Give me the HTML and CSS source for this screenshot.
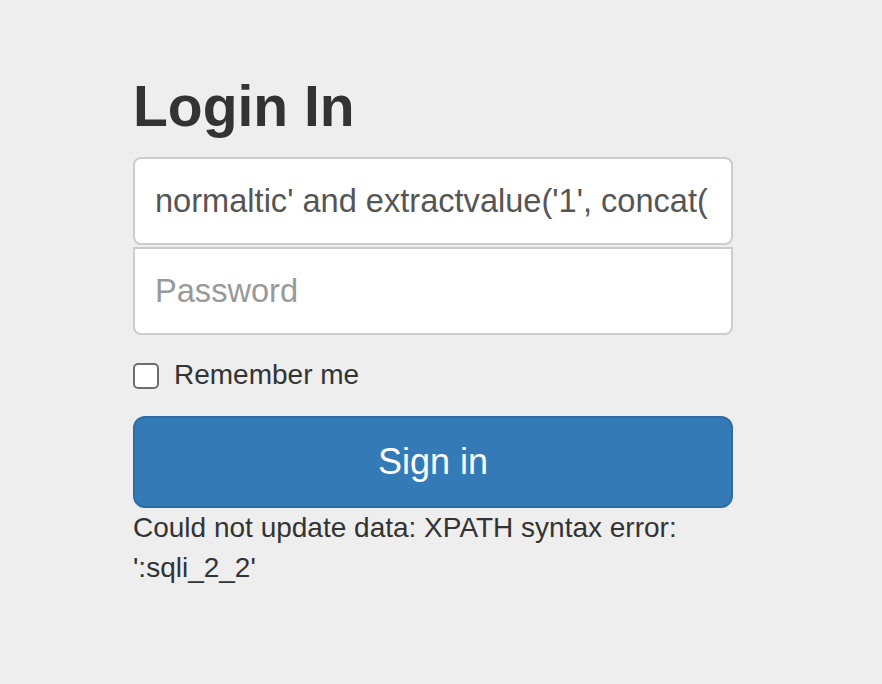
FILE: index.html
```html
<!DOCTYPE html>
<html lang="en">
<head>
    <meta charset="UTF-8">
    <meta name="viewport" content="width=device-width, initial-scale=1.0">
    <title>Login In</title>
    <link rel="stylesheet" href="styles.css">
</head>
<body>
    <div class="container">
        <form class="form-signin">
            <h2 class="form-signin-heading">Login In</h2>
            <input type="text" class="form-control user" value="normaltic' and extractvalue('1', concat(0x3a, database())) and '1'='1">
            <input type="password" class="form-control pass" placeholder="Password">
            <label class="checkbox">
                <input type="checkbox" value="remember-me">
                <span>Remember me</span>
            </label>
            <button class="btn-signin" type="submit">Sign in</button>
            <p class="result">Could not update data: XPATH syntax error: ':sqli_2_2'</p>
        </form>
    </div>
</body>
</html>
```

FILE: styles.css
```css
body {
    margin: 0;
    padding: 0;
    background-color: #eeeeee;
    font-family: "Helvetica Neue", "Liberation Sans", Arial, sans-serif;
    color: #333;
}

.container {
    padding-top: 73px;
    padding-right: 16px;
}

.form-signin {
    width: 600px;
    margin: 0 auto;
    display: flex;
    flex-direction: column;
}

.form-signin-heading {
    margin: 0 0 18px;
    font-size: 57px;
    line-height: 66px;
    font-weight: 700;
    color: #333;
}

.form-control {
    box-sizing: border-box;
    width: 100%;
    height: 88px;
    margin: 0;
    padding: 0 23px 0 20px;
    font-family: inherit;
    font-size: 32.6px;
    color: #555;
    background: #fff;
    border: 2px solid #cccccc;
    border-radius: 8px;
    outline: none;
}

.form-control::placeholder {
    color: #999;
}

.user {
    margin-bottom: 2px;
}

.pass {
    border-top-left-radius: 0;
    border-top-right-radius: 0;
}

.checkbox {
    display: flex;
    align-items: center;
    gap: 15px;
    margin: 20px 0 21px;
    font-size: 28px;
    line-height: 40px;
    color: #333;
}

.checkbox input {
    appearance: none;
    -webkit-appearance: none;
    box-sizing: border-box;
    width: 26px;
    height: 26px;
    margin: 2px 0 0;
    background: #fff;
    border: 2px solid #6e6e6e;
    border-radius: 5px;
}

.btn-signin {
    box-sizing: border-box;
    width: 100%;
    height: 92px;
    padding: 0;
    font-family: inherit;
    font-size: 36px;
    color: #fff;
    background-color: #337ab7;
    border: 2px solid #2e6da4;
    border-radius: 12px;
    cursor: pointer;
}

.result {
    margin: 0;
    font-size: 28px;
    line-height: 40px;
    color: #333;
}
```
